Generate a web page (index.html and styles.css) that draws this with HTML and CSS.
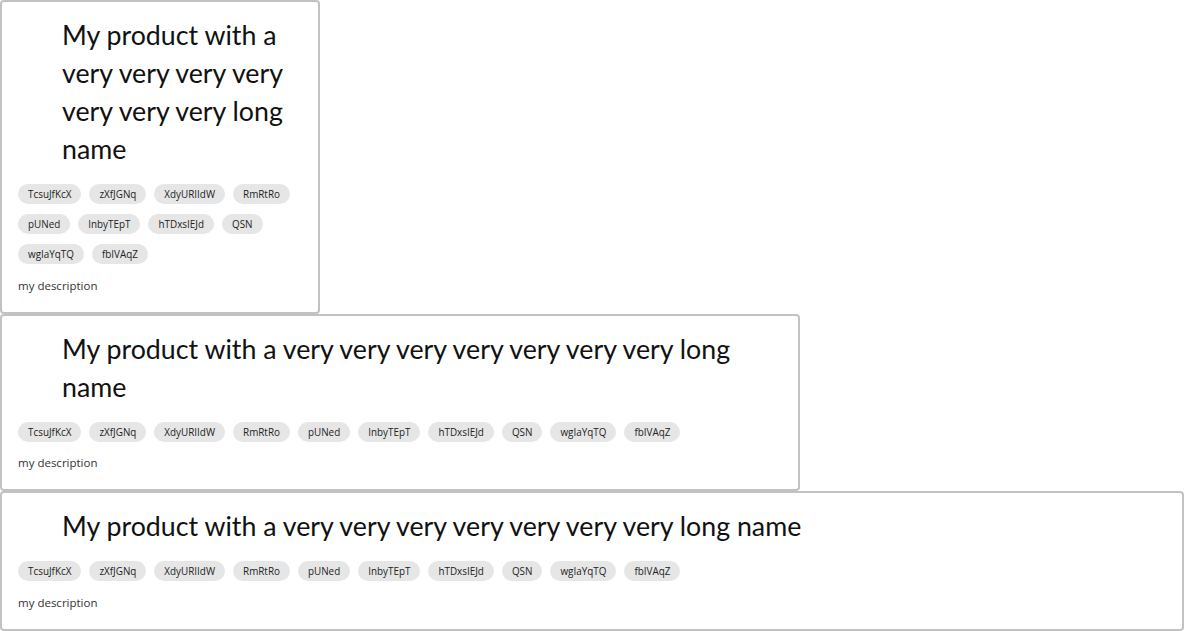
FILE: index.html
```html
<!DOCTYPE html>
<html>
<head>
<meta charset="utf-8">
<link rel="stylesheet" href="styles.css">
</head>
<body>
<div class="card card-narrow">
  <h1 class="title">My product with a very very very very very very very long name</h1>
  <div class="tags">
    <span class="tag">TcsuJfKcX</span><span class="tag">zXfJGNq</span><span class="tag">XdyURIIdW</span><span class="tag">RmRtRo</span><span class="tag">pUNed</span><span class="tag">InbyTEpT</span><span class="tag">hTDxsIEJd</span><span class="tag">QSN</span><span class="tag">wgIaYqTQ</span><span class="tag">fbIVAqZ</span>
  </div>
  <p class="desc">my description</p>
</div>
<div class="card card-medium">
  <h1 class="title">My product with a very very very very very very very long name</h1>
  <div class="tags">
    <span class="tag">TcsuJfKcX</span><span class="tag">zXfJGNq</span><span class="tag">XdyURIIdW</span><span class="tag">RmRtRo</span><span class="tag">pUNed</span><span class="tag">InbyTEpT</span><span class="tag">hTDxsIEJd</span><span class="tag">QSN</span><span class="tag">wgIaYqTQ</span><span class="tag">fbIVAqZ</span>
  </div>
  <p class="desc">my description</p>
</div>
<div class="card card-wide">
  <h1 class="title">My product with a very very very very very very very long name</h1>
  <div class="tags">
    <span class="tag">TcsuJfKcX</span><span class="tag">zXfJGNq</span><span class="tag">XdyURIIdW</span><span class="tag">RmRtRo</span><span class="tag">pUNed</span><span class="tag">InbyTEpT</span><span class="tag">hTDxsIEJd</span><span class="tag">QSN</span><span class="tag">wgIaYqTQ</span><span class="tag">fbIVAqZ</span>
  </div>
  <p class="desc">my description</p>
</div>
</body>
</html>
```
FILE: styles.css
```css
html, body {
  margin: 0;
  padding: 0;
  background: #ffffff;
}

body {
  font-family: "Open Sans", "Noto Sans", sans-serif;
  color: #111;
}

.card {
  box-sizing: border-box;
  border: 2px solid #c2c2c2;
  border-radius: 4px;
  padding: 14px 16px 18px 16px;
  background: #fff;
}

.card-narrow { width: 320px; }
.card-medium { width: 800px; }
.card-wide { width: 100%; }

.title {
  margin: 0 0 16px 44px;
  font-family: "Lato", sans-serif;
  font-weight: 400;
  font-size: 26.75px;
  line-height: 38px;
  color: #111;
}

.tags {
  display: flex;
  flex-wrap: wrap;
  gap: 10px 8px;
}

.tag {
  display: inline-flex;
  align-items: center;
  height: 20px;
  padding: 0 10px;
  border-radius: 10px;
  background: #e6e6e6;
  font-size: 9.9px;
  color: #222;
  line-height: 20px;
}

.desc {
  margin: 13.5px 0 0 0;
  font-size: 11.5px;
  line-height: 16px;
  color: #333;
}
```
